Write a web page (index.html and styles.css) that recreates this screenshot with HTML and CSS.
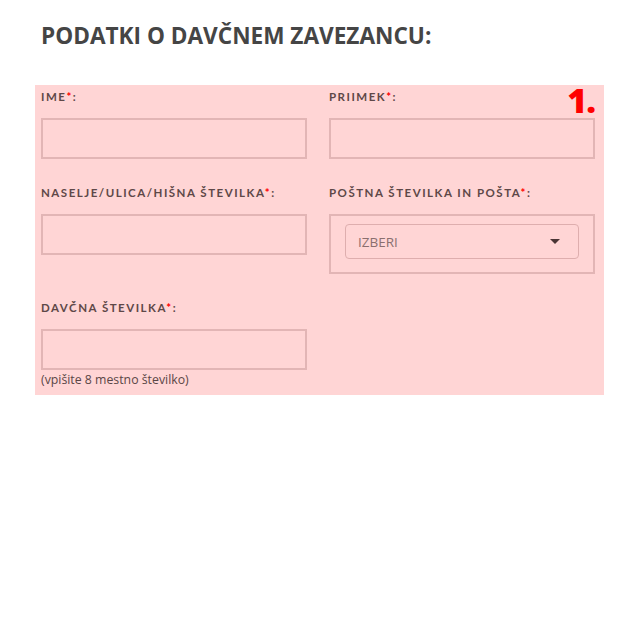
FILE: index.html
```html
<!DOCTYPE html>
<html lang="sl">
<head>
  <meta charset="UTF-8">
  <title>Podatki o davčnem zavezancu</title>
  <link rel="stylesheet" href="styles.css">
</head>
<body>
  <div class="page">
    <h2 class="title">PODATKI O DAVČNEM ZAVEZANCU:</h2>

    <div class="panel">
      <span class="step">1.</span>

      <div class="field">
        <label>IME<span class="req">*</span>:</label>
        <input type="text" class="box">
      </div>

      <div class="field">
        <label>PRIIMEK<span class="req">*</span>:</label>
        <input type="text" class="box">
      </div>

      <div class="field">
        <label>NASELJE/ULICA/HIŠNA ŠTEVILKA<span class="req">*</span>:</label>
        <input type="text" class="box">
      </div>

      <div class="field">
        <label>POŠTNA ŠTEVILKA IN POŠTA<span class="req">*</span>:</label>
        <div class="select-wrap">
          <div class="select">
            <span>IZBERI</span>
            <span class="caret"></span>
          </div>
        </div>
      </div>

      <div class="field">
        <label>DAVČNA ŠTEVILKA<span class="req">*</span>:</label>
        <input type="text" class="box">
        <div class="hint">(vpišite 8 mestno številko)</div>
      </div>
    </div>
  </div>
</body>
</html>
```

FILE: styles.css
```css
body {
  margin: 0;
  background-color: #ffffff;
  font-family: 'Open Sans', sans-serif;
}

.page {
  padding: 0 0 0 35px;
  width: 569px;
}

.title {
  margin: 0;
  padding: 23px 0 0 6px;
  height: 85px;
  box-sizing: border-box;
  font-size: 22.6px;
  line-height: 26px;
  font-weight: 700;
  color: #454545;
}

.panel {
  position: relative;
  background-color: #ffd5d5;
  display: grid;
  grid-template-columns: 266px 266px;
  column-gap: 22px;
  row-gap: 27px;
  padding: 5px 9px 7px 6px;
}

.step {
  position: absolute;
  top: -6px;
  right: 9px;
  font-family: 'Open Sans', sans-serif;
  font-size: 34px;
  font-weight: 800;
  color: #ff0000;
  line-height: 42px;
  letter-spacing: -1px;
}

.field label {
  display: block;
  font-family: 'Lato', sans-serif;
  font-size: 11.5px;
  line-height: 14px;
  font-weight: 700;
  letter-spacing: 1.5px;
  color: #5e4848;
  margin-bottom: 14px;
}

.req {
  color: #ff0000;
}

.box {
  display: block;
  width: 266px;
  height: 41px;
  box-sizing: border-box;
  border: 2px solid #e2b5b5;
  background-color: #ffd5d5;
  margin: 0;
  padding: 0 8px;
}

.select-wrap {
  margin-top: 1px;
  height: 60px;
  box-sizing: border-box;
  border: 2px solid #e2b5b5;
  padding: 8px 14px 0 14px;
}

.select {
  height: 35px;
  box-sizing: border-box;
  border: 1px solid #deaeae;
  border-radius: 4px;
  display: flex;
  align-items: center;
  justify-content: space-between;
  padding: 0 18px 0 12px;
  font-family: 'Open Sans', sans-serif;
  font-size: 13.5px;
  color: #8a6f6f;
}

.caret {
  width: 0;
  height: 0;
  border-left: 5px solid transparent;
  border-right: 5px solid transparent;
  border-top: 5px solid #4a3535;
}

.hint {
  font-family: 'Open Sans', sans-serif;
  font-size: 12.3px;
  line-height: 16px;
  margin-top: 2px;
  color: #5a4646;
}
```
